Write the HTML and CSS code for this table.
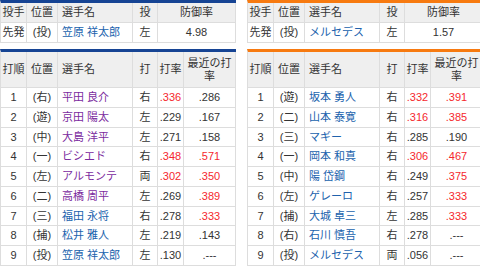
FILE: index.html
```html
<!DOCTYPE html>
<html lang="ja">
<head>
<meta charset="utf-8">
<link rel="stylesheet" href="styles.css">
</head>
<body>
<div class="page">
  <section class="team dragons">
    <table class="grid pitcher">
      <colgroup><col class="c1"><col class="c2"><col class="c3"><col class="c4"><col class="c5"></colgroup>
      <thead><tr><th>投手</th><th>位置</th><th class="l">選手名</th><th>投</th><th>防御率</th></tr></thead>
      <tbody><tr><td>先発</td><td>(投)</td><td class="l"><a class="nm">笠原 祥太郎</a></td><td>左</td><td>4.98</td></tr></tbody>
    </table>
    <table class="grid lineup">
      <colgroup><col class="c1"><col class="c2"><col class="c3"><col class="c4"><col class="c5"><col class="c6"></colgroup>
      <thead><tr><th>打順</th><th>位置</th><th class="l">選手名</th><th>打</th><th>打率</th><th class="wrap">最近の打率</th></tr></thead>
      <tbody>
        <tr><td>1</td><td>(右)</td><td class="l"><a class="nm v">平田 良介</a></td><td>右</td><td class="hot">.336</td><td>.286</td></tr>
        <tr><td>2</td><td>(遊)</td><td class="l"><a class="nm v">京田 陽太</a></td><td>左</td><td>.229</td><td>.167</td></tr>
        <tr><td>3</td><td>(中)</td><td class="l"><a class="nm v">大島 洋平</a></td><td>左</td><td>.271</td><td>.158</td></tr>
        <tr><td>4</td><td>(一)</td><td class="l"><a class="nm v">ビシエド</a></td><td>右</td><td class="hot">.348</td><td class="hot">.571</td></tr>
        <tr><td>5</td><td>(左)</td><td class="l"><a class="nm v">アルモンテ</a></td><td>両</td><td class="hot">.302</td><td class="hot">.350</td></tr>
        <tr><td>6</td><td>(二)</td><td class="l"><a class="nm v">高橋 周平</a></td><td>左</td><td>.269</td><td class="hot">.389</td></tr>
        <tr><td>7</td><td>(三)</td><td class="l"><a class="nm">福田 永将</a></td><td>右</td><td>.278</td><td class="hot">.333</td></tr>
        <tr><td>8</td><td>(捕)</td><td class="l"><a class="nm">松井 雅人</a></td><td>左</td><td>.219</td><td>.143</td></tr>
        <tr><td>9</td><td>(投)</td><td class="l"><a class="nm">笠原 祥太郎</a></td><td>左</td><td>.130</td><td>.---</td></tr>
      </tbody>
    </table>
  </section>
  <section class="team giants">
    <table class="grid pitcher">
      <colgroup><col class="c1"><col class="c2"><col class="c3"><col class="c4"><col class="c5"></colgroup>
      <thead><tr><th>投手</th><th>位置</th><th class="l">選手名</th><th>投</th><th>防御率</th></tr></thead>
      <tbody><tr><td>先発</td><td>(投)</td><td class="l"><a class="nm">メルセデス</a></td><td>左</td><td>1.57</td></tr></tbody>
    </table>
    <table class="grid lineup">
      <colgroup><col class="c1"><col class="c2"><col class="c3"><col class="c4"><col class="c5"><col class="c6"></colgroup>
      <thead><tr><th>打順</th><th>位置</th><th class="l">選手名</th><th>打</th><th>打率</th><th class="wrap">最近の打率</th></tr></thead>
      <tbody>
        <tr><td>1</td><td>(遊)</td><td class="l"><a class="nm">坂本 勇人</a></td><td>右</td><td class="hot">.332</td><td class="hot">.391</td></tr>
        <tr><td>2</td><td>(二)</td><td class="l"><a class="nm">山本 泰寛</a></td><td>右</td><td class="hot">.316</td><td class="hot">.385</td></tr>
        <tr><td>3</td><td>(三)</td><td class="l"><a class="nm">マギー</a></td><td>右</td><td>.285</td><td>.190</td></tr>
        <tr><td>4</td><td>(一)</td><td class="l"><a class="nm">岡本 和真</a></td><td>右</td><td class="hot">.306</td><td class="hot">.467</td></tr>
        <tr><td>5</td><td>(中)</td><td class="l"><a class="nm">陽 岱鋼</a></td><td>右</td><td>.249</td><td class="hot">.375</td></tr>
        <tr><td>6</td><td>(左)</td><td class="l"><a class="nm">ゲレーロ</a></td><td>右</td><td>.257</td><td class="hot">.333</td></tr>
        <tr><td>7</td><td>(捕)</td><td class="l"><a class="nm">大城 卓三</a></td><td>左</td><td>.285</td><td class="hot">.333</td></tr>
        <tr><td>8</td><td>(右)</td><td class="l"><a class="nm">石川 慎吾</a></td><td>右</td><td>.278</td><td>.---</td></tr>
        <tr><td>9</td><td>(投)</td><td class="l"><a class="nm">メルセデス</a></td><td>両</td><td>.056</td><td>.---</td></tr>
      </tbody>
    </table>
  </section>
</div>
</body>
</html>
```

FILE: styles.css
```css
html, body {
  margin: 0;
  padding: 0;
  background: #fff;
}
body {
  width: 480px;
  height: 267px;
  overflow: hidden;
  font-family: "Liberation Sans", "Noto Sans CJK JP", sans-serif;
  font-size: 11px;
  color: #333;
}
.page {
  display: flex;
  gap: 12px;
  width: 482px;
}
.team {
  width: 235px;
  flex: none;
  display: flex;
  flex-direction: column;
  gap: 6px;
}
.grid {
  width: 235px;
  table-layout: fixed;
  border-collapse: separate;
  border-spacing: 0;
  border-left: 1px solid #ddd;
}
.dragons .grid { border-top: 3px solid #164494; }
.giants .grid { border-top: 3px solid #f77a10; }
.c1 { width: 26px; }
.c2 { width: 31px; }
.c3 { width: 75px; }
.c4 { width: 25px; }
.c5 { width: 26px; }
.c6 { width: 52px; }
.pitcher .c5 { width: 78px; }
th, td {
  padding: 0;
  text-align: center;
  vertical-align: middle;
  border-right: 1px solid #ddd;
  border-bottom: 1px solid #ddd;
  font-weight: normal;
  white-space: nowrap;
}
th {
  background: #efefef;
  line-height: 19px;
}
td {
  background: #fff;
  line-height: 19px;
}
.l { text-align: left; padding-left: 4px; }
.lineup th {
  height: 35px;
  line-height: 13px;
}
.lineup th.wrap {
  white-space: normal;
  padding: 0 3px;
}
.lineup td { line-height: 18.78px; }
.nm { color: #2062ad; text-decoration: none; }
.nm.v { color: #7b2b9e; }
.hot { color: #f5282d; }
```
